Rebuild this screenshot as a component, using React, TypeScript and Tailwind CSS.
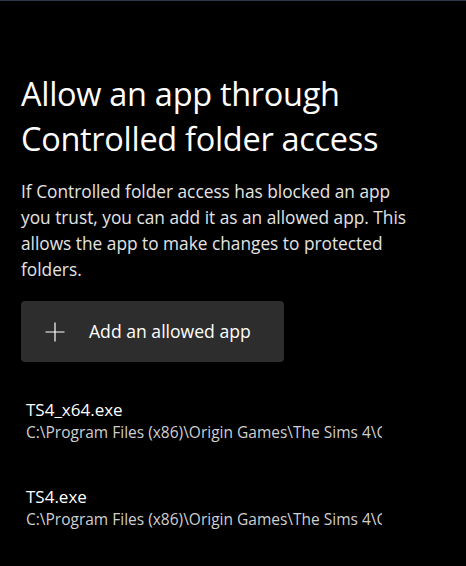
import React from 'react';

const apps = [
  { name: 'TS4_x64.exe', path: 'C:\\Program Files (x86)\\Origin Games\\The Sims 4\\Game\\Bin\\TS4_x64.exe' },
  { name: 'TS4.exe', path: 'C:\\Program Files (x86)\\Origin Games\\The Sims 4\\Game\\Bin\\TS4.exe' },
];

const PlusIcon = () => (
  <svg width="20" height="20" viewBox="0 0 20 20" fill="none" stroke="#ffffff" strokeWidth="1.2">
    <path d="M10 0.5V19.5M0.5 10H19.5" />
  </svg>
);

const App: React.FC = () => {
  return (
    <div
      className="w-[466px] h-[566px] bg-black overflow-hidden border-t border-[#2f3a4e] text-white"
      style={{ fontFamily: '"Open Sans", "Noto Sans", sans-serif' }}
    >
      <div className="pl-[21px] pt-[70px]">
        <h1 className="text-[32.5px] leading-[45px] font-normal tracking-[-0.3px]">
          Allow an app through
          <br />
          Controlled folder access
        </h1>

        <p className="mt-[18px] w-[440px] text-[17.3px] leading-[26px] text-[#e4e4e4]">
          If Controlled folder access has blocked an app
          <br />
          you trust, you can add it as an allowed app. This
          <br />
          allows the app to make changes to protected
          <br />
          folders.
        </p>

        <button className="mt-[18px] w-[263px] h-[61px] bg-[#2d2d2d] rounded-[4px] flex items-center pl-[24px] text-[17.6px] text-white">
          <PlusIcon />
          <span className="ml-[24px]">Add an allowed app</span>
        </button>

        <div className="mt-[37px] pl-[5px] flex flex-col gap-[42px]">
          {apps.map((app) => (
            <div key={app.name} className="flex flex-col">
              <div className="text-[17px] leading-[22px] text-white">{app.name}</div>
              <div className="w-[356px] overflow-hidden whitespace-nowrap text-[15.5px] leading-[23px] text-[#cfcfcf]">
                {app.path}
              </div>
            </div>
          ))}
        </div>
      </div>
    </div>
  );
};

export default App;
